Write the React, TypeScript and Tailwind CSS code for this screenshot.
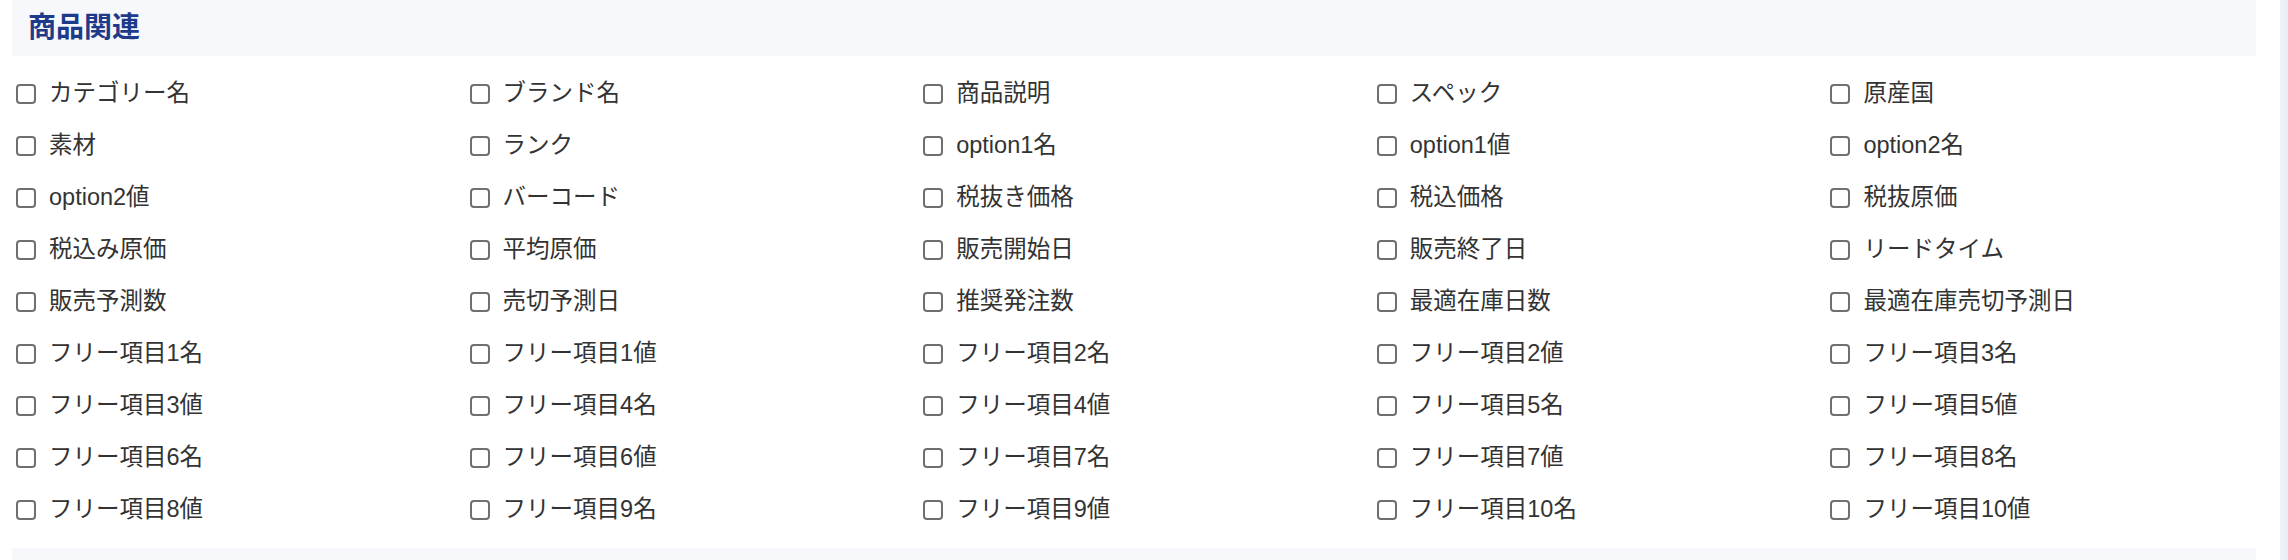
const items = [
  "カテゴリー名", "ブランド名", "商品説明", "スペック", "原産国",
  "素材", "ランク", "option1名", "option1値", "option2名",
  "option2値", "バーコード", "税抜き価格", "税込価格", "税抜原価",
  "税込み原価", "平均原価", "販売開始日", "販売終了日", "リードタイム",
  "販売予測数", "売切予測日", "推奨発注数", "最適在庫日数", "最適在庫売切予測日",
  "フリー項目1名", "フリー項目1値", "フリー項目2名", "フリー項目2値", "フリー項目3名",
  "フリー項目3値", "フリー項目4名", "フリー項目4値", "フリー項目5名", "フリー項目5値",
  "フリー項目6名", "フリー項目6値", "フリー項目7名", "フリー項目7値", "フリー項目8名",
  "フリー項目8値", "フリー項目9名", "フリー項目9値", "フリー項目10名", "フリー項目10値",
];

function Field({ label }: { label: string }) {
  return (
    <label className="flex h-[52px] items-center gap-[13px] pl-[4px]">
      <span className="h-[20px] w-[20px] shrink-0 rounded-[4px] border-2 border-[#6f6f6f] bg-white" />
      <span className="text-[23.5px] leading-none text-[#333333]">{label}</span>
    </label>
  );
}

export default function App() {
  return (
    <div
      className="flex h-[560px] w-full overflow-hidden bg-white"
      style={{ fontFamily: '"Liberation Sans", "Noto Sans CJK JP", sans-serif' }}
    >
      <main className="w-[2280px] shrink-0 pl-[12px]">
        <section>
          <div className="mr-[24px] flex h-[56px] items-center bg-[#f7f8fc] pl-[16px]">
            <h2 className="text-[28px] font-bold leading-none text-[#1e3a8a]">商品関連</h2>
          </div>
          <div className="mt-[12px] grid grid-cols-5">
            {items.map((it) => (
              <Field key={it} label={it} />
            ))}
          </div>
        </section>
        <div className="mr-[24px] mt-[12px] h-[40px] bg-[#f7f8fc]" />
      </main>
      <div className="flex-1 bg-gradient-to-r from-[#f1f3f9] to-[#e9ecf6]" />
    </div>
  );
}
